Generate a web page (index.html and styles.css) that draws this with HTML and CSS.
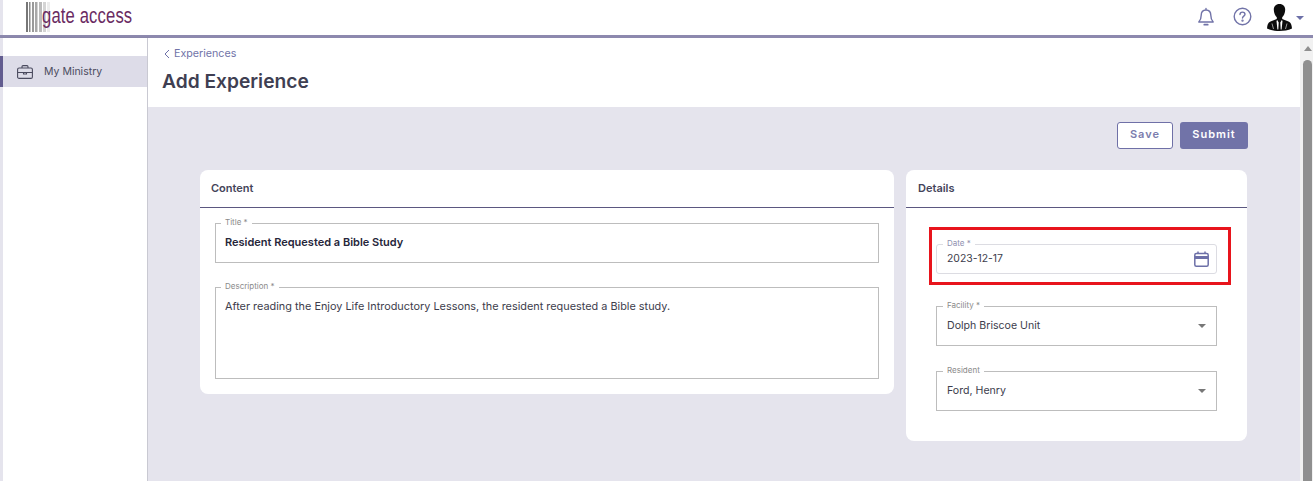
FILE: index.html
```html
<!DOCTYPE html>
<html lang="en">
<head>
<meta charset="utf-8">
<title>Add Experience</title>
<link rel="stylesheet" href="styles.css">
</head>
<body>
<header class="topbar">
  <div class="logo">
    <svg class="logo-bars" width="27" height="30" viewBox="0 0 27 30">
      <rect x="0" width="2" height="30" fill="#777"/>
      <rect x="3" width="1.500" height="30" fill="#8a8a8a"/>
      <rect x="6" width="2" height="30" fill="#999"/>
      <rect x="9" width="2.500" height="30" fill="#a8a8a8"/>
      <rect x="13" width="3" height="30" fill="#bbb"/>
      <rect x="17" width="3" height="30" fill="#d4d4d4"/>
      <rect x="21" width="3" height="30" fill="#ececec"/>
    </svg>
    <span class="logo-text">gate access</span>
  </div>
  <div class="top-actions">
    <svg class="icon-bell" width="18" height="20" viewBox="0 0 18 20" fill="none" stroke="#7173a8" stroke-width="1.400" stroke-linejoin="round" stroke-linecap="round">
      <path d="M9 1.500V3M9 3C5.800 3 4.200 5.500 4.200 8.300C4.200 11.500 3.500 13.300 1.800 15H16.200C14.500 13.300 13.800 11.500 13.800 8.300C13.800 5.500 12.200 3 9 3Z"/>
      <path d="M7.300 17.700H10.700" stroke-width="1.800"/>
    </svg>
    <svg class="icon-help" width="19" height="19" viewBox="0 0 19 19" fill="none" stroke="#7173a8" stroke-width="1.400" stroke-linecap="round">
      <circle cx="9.500" cy="9.500" r="8.300"/>
      <path d="M7 7.500C7 6 8.100 5.100 9.500 5.100C10.900 5.100 12 6 12 7.300C12 9 9.500 9.200 9.500 11"/>
      <circle cx="9.500" cy="13.600" r="0.500"/>
    </svg>
    <svg class="avatar" width="25" height="27" viewBox="0 0 25 27">
      <path fill="#0c0c0c" d="M12.500 0C8.700 0 6.800 2.500 6.800 5.800C6.800 9 8.300 12 9.800 13.300V15L3.500 17.500C1 18.500 0.300 21 0 24.500C4 26.300 8 27 12.500 27C17 27 21 26.300 25 24.500C24.700 21 24 18.500 21.500 17.500L15.200 15V13.300C16.700 12 18.200 9 18.200 5.800C18.200 2.500 16.300 0 12.500 0Z"/>
      <path fill="#fff" d="M10.200 16L11.700 18.500L11.300 25.500H10.400L9.500 17ZM14.800 16L13.300 18.500L13.700 25.500H14.600L15.500 17Z"/>
      <path stroke="#fff" stroke-width="0.600" fill="none" d="M5 19.500L6.500 25M20 19.500L18.500 25"/>
    </svg>
    <span class="caret"></span>
  </div>
</header>
<div class="shell">
  <nav class="sidebar">
    <a class="nav-item">
      <svg width="16" height="14" viewBox="0 0 16 14" fill="none" stroke="#4a4a5e" stroke-width="1.100">
        <rect x="0.600" y="3" width="14.800" height="10.400" rx="1.500"/>
        <path d="M5 3V1.700C5 1 5.500 0.600 6 0.600H10C10.500 0.600 11 1 11 1.700V3M0.600 7.500H15.400M6.500 7.500V9H9.500V7.500"/>
      </svg>
      <span>My Ministry</span>
    </a>
  </nav>
  <main class="main">
    <div class="page-head">
      <a class="crumb"><svg width="6" height="10" viewBox="0 0 6 10" fill="none" stroke="#6d70a8" stroke-width="1"><path d="M5 1L1 5L5 9"/></svg>Experiences</a>
      <h1>Add Experience</h1>
    </div>
    <div class="page-body">
      <div class="actions">
        <button class="btn btn-outline">Save</button>
        <button class="btn btn-solid">Submit</button>
      </div>
      <div class="cards">
        <section class="card card-content">
          <h2>Content</h2>
          <div class="card-body">
            <fieldset class="field field-title">
              <legend>Title *</legend>
              <div class="value strong">Resident Requested a Bible Study</div>
            </fieldset>
            <fieldset class="field field-desc">
              <legend>Description *</legend>
              <div class="value">After reading the Enjoy Life Introductory Lessons, the resident requested a Bible study.</div>
            </fieldset>
          </div>
        </section>
        <section class="card card-details">
          <h2>Details</h2>
          <div class="details-body">
            <div class="highlight">
              <fieldset class="field field-date">
                <legend>Date *</legend>
                <div class="value row">
                  <span>2023-12-17</span>
                  <svg width="15" height="16" viewBox="0 0 15 16" fill="none" stroke="#6d70a8" stroke-width="1.500">
                    <rect x="0.800" y="2.500" width="13.400" height="12.700" rx="1.500"/>
                    <path d="M0.800 6.500H14.200" stroke-width="3"/>
                    <path d="M4 0.500V3M11 0.500V3"/>
                  </svg>
                </div>
              </fieldset>
            </div>
            <fieldset class="field field-select">
              <legend>Facility *</legend>
              <div class="value row"><span>Dolph Briscoe Unit</span><i class="select-caret"></i></div>
            </fieldset>
            <fieldset class="field field-select">
              <legend>Resident</legend>
              <div class="value row"><span>Ford, Henry</span><i class="select-caret"></i></div>
            </fieldset>
          </div>
        </section>
      </div>
    </div>
  </main>
  <div class="scrollbar">
    <span class="scroll-up"></span>
    <span class="scroll-thumb"></span>
  </div>
</div>
</body>
</html>
```
FILE: styles.css
```css
* { box-sizing: border-box; }
html, body { margin: 0; height: 100%; overflow: hidden; }
body {
  font-family: "Inter", "Noto Sans", sans-serif;
  color: #44445a;
  background: #fff;
  display: flex;
  flex-direction: column;
}
.topbar {
  height: 38px;
  flex: none;
  border-bottom: 3px solid #8d89ae;
  display: flex;
  align-items: flex-start;
  justify-content: space-between;
  padding-left: 26px;
  background: linear-gradient(to right, #e5e4ed 3px, #fff 3px);
}
.logo { display: flex; align-items: flex-start; height: 32px; padding-top: 2px; }
.logo-bars { margin-right: -11px; flex: none; }
.logo-text {
  font-family: "Liberation Sans Narrow", "Liberation Sans", sans-serif;
  font-size: 22px;
  line-height: 28px;
  color: #6a2b62;
  letter-spacing: 0.2px;
  transform: scaleX(0.755);
  transform-origin: left center;
  white-space: nowrap;
}
.top-actions { display: flex; align-items: flex-start; padding-right: 9px; }
.icon-bell { margin-top: 7px; margin-right: 18px; }
.icon-help { margin-top: 7px; margin-right: 15px; }
.avatar { margin-top: 4px; margin-right: 4px; }
.caret {
  margin-top: 16px;
  border-left: 4px solid transparent;
  border-right: 4px solid transparent;
  border-top: 4px solid #6d70a8;
}
.shell { flex: 1; display: flex; min-height: 0; }
.sidebar {
  width: 148px;
  flex: none;
  border-right: 1px solid #c9c9d2;
  padding-top: 18px;
  box-shadow: 1px 0 2px rgba(0,0,0,.08);
  background: linear-gradient(to right, #e5e4ed 3px, #fff 3px);
}
.nav-item {
  height: 31px;
  background: #dddce8;
  border-left: 3px solid #625c8f;
  display: flex;
  align-items: center;
  gap: 11px;
  padding-left: 14px;
  font-size: 10.500px;
  color: #4c4c60;
}
.main { flex: 1; display: flex; flex-direction: column; min-width: 0; }
.page-head { height: 69px; flex: none; padding: 9px 14px 0; background: #fff; }
.crumb {
  display: flex;
  align-items: center;
  gap: 4px;
  margin-left: 2px;
  font-size: 10.700px;
  line-height: 13px;
  color: #7173a8;
}
h1 {
  margin: 8px 0 0;
  font-size: 19.200px;
  line-height: 26px;
  font-weight: 600;
  color: #3f3f52;
}
.page-body { flex: 1; background: #e5e4ed; padding: 15px 52px 0; }
.actions { display: flex; justify-content: flex-end; gap: 7px; height: 27px; }
.btn {
  height: 27px;
  border-radius: 3px;
  font-family: inherit;
  font-size: 11px;
  font-weight: 600;
  letter-spacing: 1px;
  padding: 0 0 3px;
}
.btn-outline { width: 56px; background: #fff; border: 1px solid #6f70a7; color: #7b7cad; }
.btn-solid { width: 68px; background: #7173a8; border: 0; color: #fff; }
.cards { display: flex; gap: 12px; margin-top: 21px; align-items: flex-start; }
.card { background: #fff; border-radius: 8px; }
.card-content { width: 694px; height: 224px; }
.card-details { width: 341px; height: 271px; }
h2 {
  margin: 0;
  height: 38px;
  border-bottom: 1px solid #5b5780;
  padding: 0 11px;
  font-size: 11px;
  font-weight: 600;
  line-height: 36px;
  color: #44445a;
}
.card-details h2 { padding-left: 12px; }
.card-body { padding: 10px 15px 0; }
.field {
  margin: 0;
  padding: 0 10px;
  border: 1px solid #bdbdbd;
  min-width: 0;
}
legend {
  font-size: 8px;
  line-height: 9px;
  color: #8a8a8a;
  padding: 0 4px;
  margin-left: -4px;
  height: 10px;
}
.value { font-size: 10.880px; line-height: 16px; color: #3d3d4c; }
.strong { font-weight: 600; color: #26263a; font-size: 11px; }
.field-title { height: 45px; padding-top: 6px; padding-left: 9px; }
.field-desc { height: 97px; margin-top: 19px; padding-top: 6px; padding-left: 9px; }
.details-body { padding: 19px 13px 0 23px; }
.highlight {
  width: 302px;
  height: 58px;
  border: 3px solid #e8141c;
  padding: 7px 4px 0 4px;
}
.field-date {
  width: 281px;
  height: 35px;
  border-color: #dcdce2;
  border-radius: 3px;
  margin-top: 2px;
}
.field-date legend { color: #8f90b0; }
.row { display: flex; align-items: center; justify-content: space-between; }
.field-date .value { font-size: 10.400px; margin-top: 2px; }
.field-date .row svg { margin-right: -3px; }
.field-select { height: 45px; margin: 20px 0 0 7px; width: 281px; padding-top: 7px; }
.highlight + .field-select { margin-top: 16px; }
.field-select .value { font-size: 10.600px; }
.select-caret {
  border-left: 4px solid transparent;
  border-right: 4px solid transparent;
  border-top: 4px solid #777;
}
.scrollbar {
  width: 13px;
  flex: none;
  background: #f1f1f1;
  display: flex;
  flex-direction: column;
  align-items: center;
  padding: 8px 0 0 2px;
}
.scroll-up {
  border-left: 4px solid transparent;
  border-right: 4px solid transparent;
  border-bottom: 5px solid #8f8f8f;
}
.scroll-thumb { width: 9px; flex: 1; margin-top: 9px; background: #8f8f8f; border-radius: 5px 5px 0 0; }
```
